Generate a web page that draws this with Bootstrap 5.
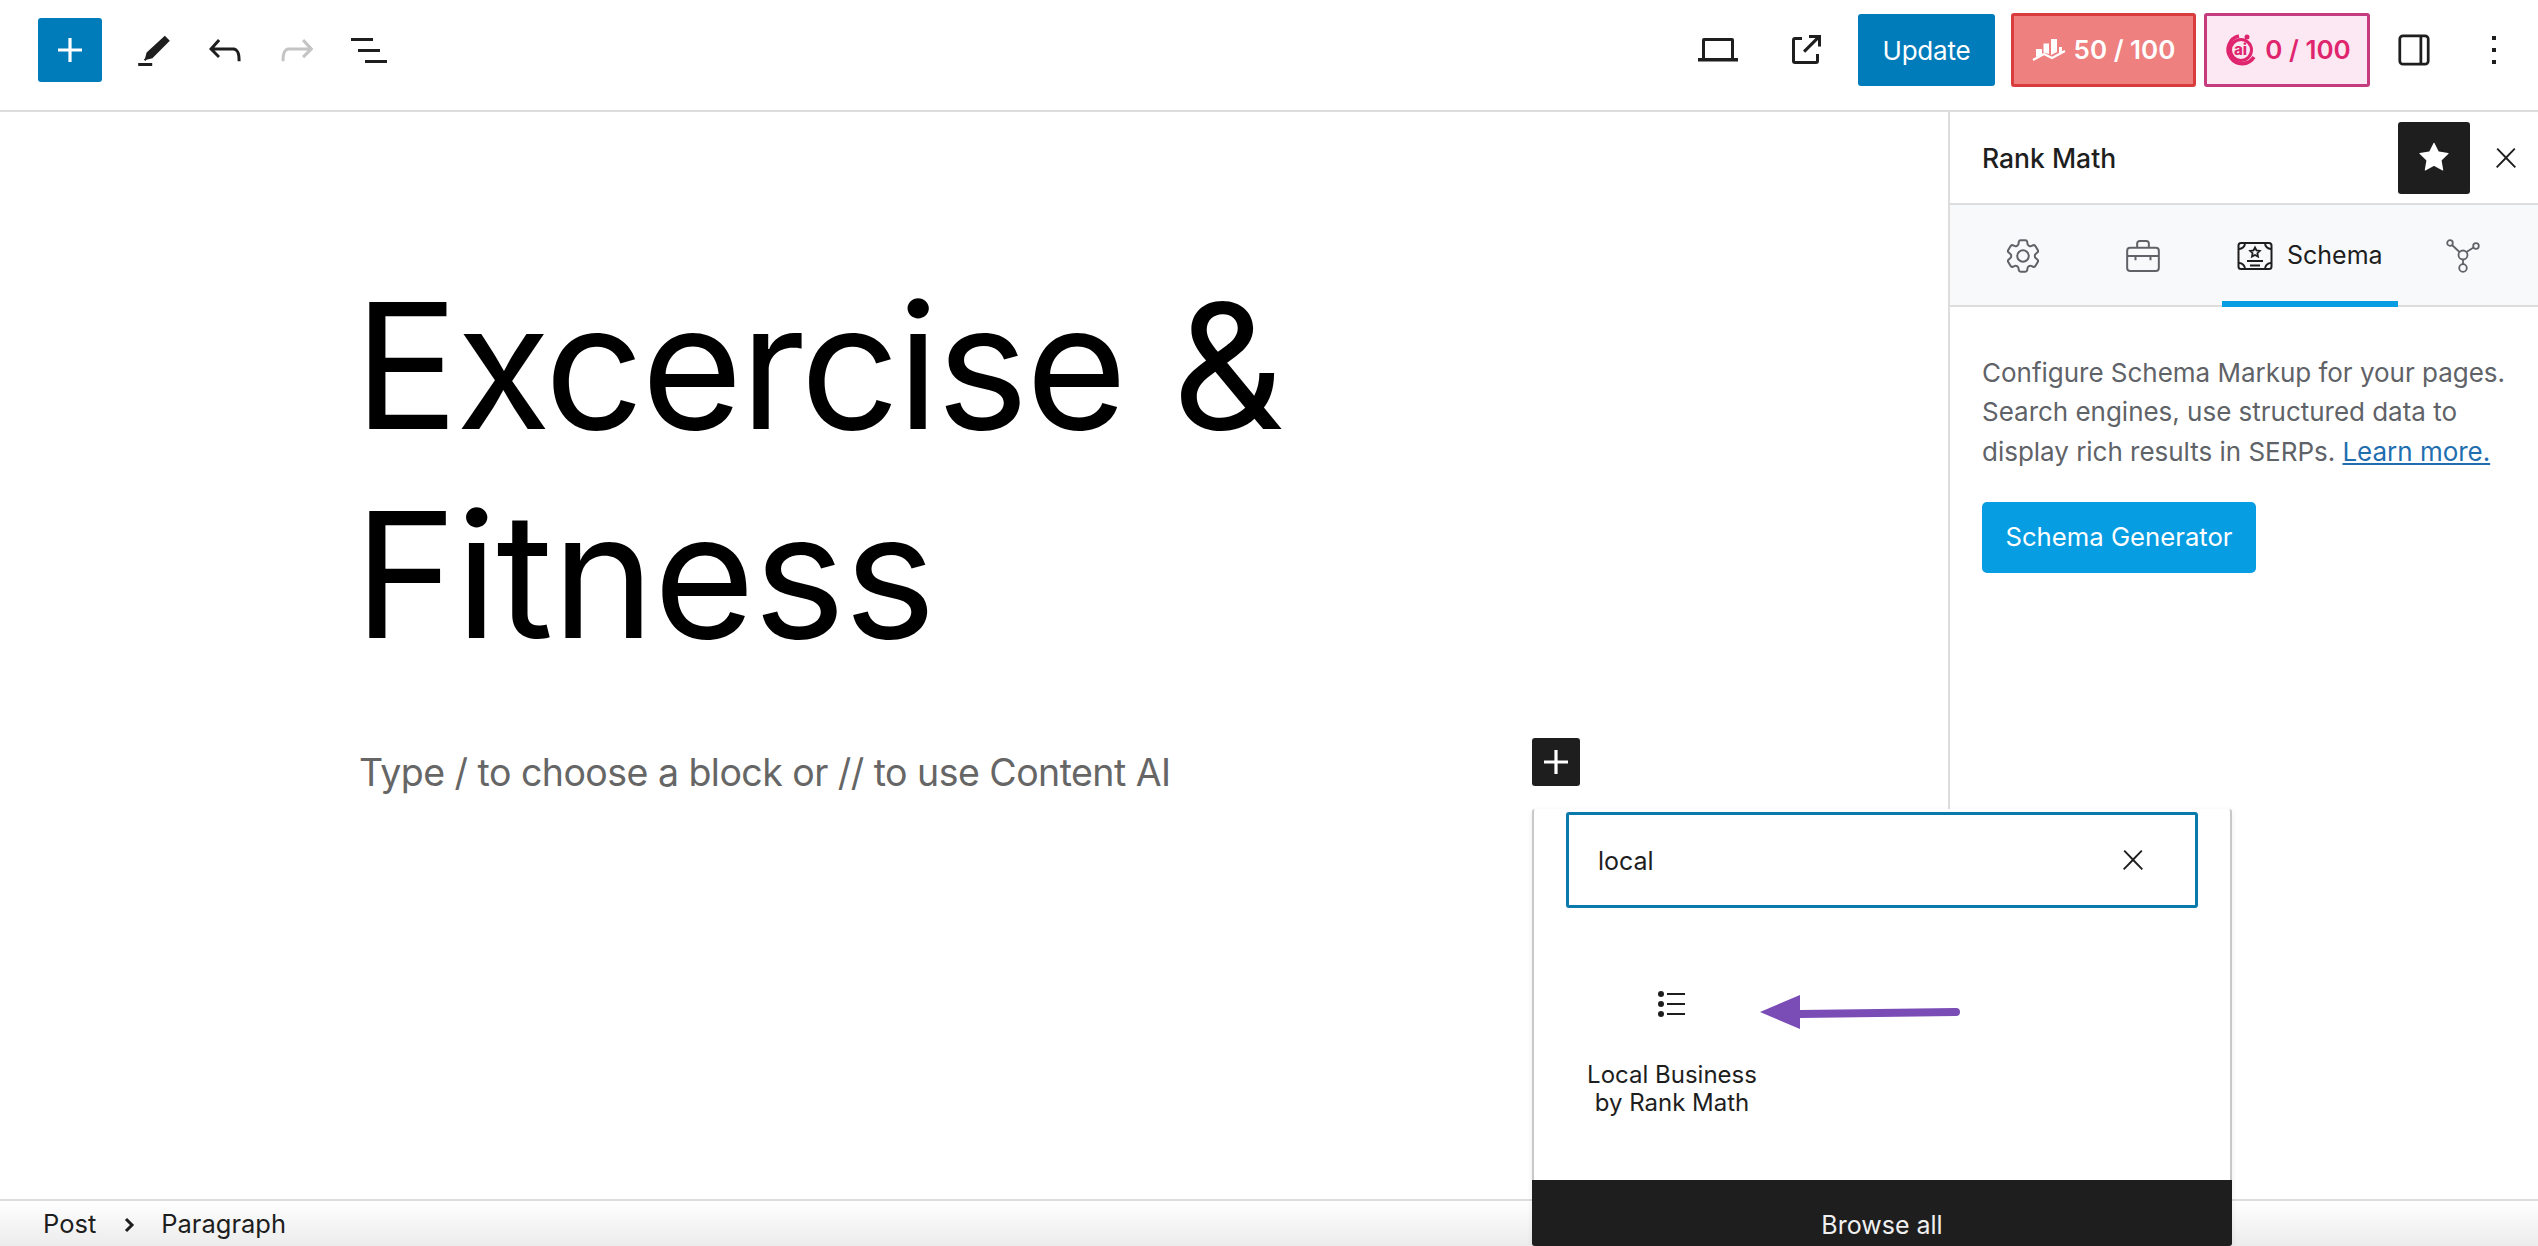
<!DOCTYPE html>
<html lang="en"><head><meta charset="utf-8"><title>Excercise &amp; Fitness</title>
<link href="https://cdn.jsdelivr.net/npm/bootstrap@5.3.0/dist/css/bootstrap.min.css" rel="stylesheet">
<style>
html,body{height:100%}
body{font-family:Inter,"Liberation Sans",sans-serif;color:#1e1e1e;background:#fff;overflow:hidden}
svg{display:block;fill:currentColor}
.tb{height:112px;border-bottom:2px solid #ddd;padding:0 8px 10px 38px;flex:none}
.ic{width:72px;height:64px;background:none;border:0;padding:0;color:#1e1e1e;flex:none}
.ic.off{color:#c4c4c4}
.addb{width:64px;height:64px;background:#007cba;color:#fff;border-radius:3px;border:0;padding:0;margin-right:15px;flex:none}
.upd{width:137px;height:72px;background:#007cba;color:#fff;border:0;border-radius:3px;font-size:26px;letter-spacing:-.2px;padding:0;margin-right:8px}
.upd:hover{background:#007cba;color:#fff}
.ext{width:88px}
.rm{height:74px;border-radius:3px;font-size:26px;font-weight:600;line-height:1;border:3px solid}
.rm1{width:185px;background:#ee8080;border-color:#d93c3c;color:#fff}
.rm2{width:166px;background:#fce8f2;border-color:#c43b7e;color:#e0256f}
.ai{font-family:Inter,sans-serif;font-size:15px;font-weight:800;fill:currentColor}
.wrap{flex:1 1 0;min-height:0}
.ed{flex:1 1 0;min-width:0;padding:149px 0 0 359px}
.ttl{font-size:174px;line-height:209px;font-weight:400;color:#000;margin:0 0 0 -5px;letter-spacing:-1.3px}
.tight{letter-spacing:-2.600px}
.ph{font-size:37.5px;line-height:60px;letter-spacing:-.54px;color:#666;margin:64px 0 0}
.sb{width:590px;flex:none;border-left:2px solid #ddd}
.sh{height:93px;border-bottom:2px solid #ddd;padding-left:32px}
.sh h2{font-size:26.5px;font-weight:500;margin:0;padding-top:2px;color:#1e1e1e}
.star{width:72px;height:72px;background:#1e1e1e;color:#fff;border:0;border-radius:3px;padding:0;margin-left:auto}
.xb{width:64px;height:64px;background:none;border:0;padding:0;color:#1e1e1e;flex:none}
.st{height:102px;background:#f8f9fa;border-bottom:2px solid #ddd;padding-left:13px}
.tabi{width:120px;height:100px;color:#5f6368;padding-top:2px}
.taba{width:176px;height:102px;margin-left:19px;box-shadow:inset 0 -6px 0 #069de3;color:#1e1e1e;padding:2px 0 2px 15px;font-size:25px;gap:14px}
.tabl{width:130px;height:100px;color:#5f6368;padding-top:2px}
.sp{padding:46px 20px 0 32px;font-size:26px;line-height:39.4px;letter-spacing:-.02px;color:#5f6368}
.sp a{color:#1f6fb0}
.gen{background:#069de3;color:#fff;border:0;border-radius:5px;width:274px;height:71px;font-size:25.700px;padding:0;margin-top:31px}
.gen:hover{background:#069de3;color:#fff}
.stat{height:47px;flex:none;border-top:2px solid #ddd;background:linear-gradient(#fff,#ececec);padding:2px 0 0 43px;font-size:25.500px}
.stat svg{margin:0 24px 0 25px}
.plusb{left:1532px;top:738px;width:48px;height:48px;background:#1e1e1e;color:#fff;border:0;border-radius:3px;padding:0}
.pop{left:1532px;top:809px;width:700px;bottom:0;background:#fff;border-left:2px solid #c8c8c8;border-right:2px solid #c8c8c8;border-radius:3px;box-shadow:0 2px 6px rgba(0,0,0,.08)}
.srch{margin:3px 32px 0;height:96px;border:3px solid #0a7aad;border-radius:3px;flex:none}
.srch .form-control{border:0;background:none;box-shadow:none;font-size:25px;padding:2px 0 0 29px;height:100%;color:#1e1e1e;font-family:inherit}
.srch .xb{margin-right:30px}
.itm{width:220px;margin:83px 0 0 28px;text-align:center;font-size:24px;line-height:28px;color:#1e1e1e}
.itm svg{margin:0 auto 44px}
.arr{left:226px;top:185px}
.brw{margin:auto -2px 0;height:66px;background:#1e1e1e;color:#f0f0f0;border:0;border-radius:0 0 3px 3px;font-size:25px;padding:20px 0 0;flex:none;line-height:50px}
</style></head>
<body class="d-flex flex-column position-relative">
<header class="tb d-flex align-items-center">
 <button class="addb d-flex align-items-center justify-content-center" aria-label="Add block"><svg width="48" height="48" viewBox="0 0 24 24"><path d="M18 11.200h-5.200V6h-1.600v5.200H6v1.600h5.200V18h1.600v-5.200H18z"/></svg></button>
 <button class="ic d-flex align-items-center justify-content-center" aria-label="Tools"><svg width="48" height="48" viewBox="0 0 24 24"><path d="M18.300 4.900l2.500 2.500-8.700 8.700-3 .8-.6.600-.7-.7.600-.6.800-3zM5 18.500h7V20H5z" transform="translate(-.4 0)"/></svg></button>
 <button class="ic d-flex align-items-center justify-content-center" aria-label="Undo"><svg width="48" height="48" viewBox="0 0 24 24"><path d="M18.300 11.700c-.6-.6-1.400-.9-2.300-.9H6.700l2.900-3.300-1.100-1-4.500 5L8.500 16l1-1-2.700-2.700H16c.5 0 .9.200 1.300.5 1 1 1 3.400 1 4.500v.3h1.500v-.2c0-1.500 0-4.300-1.500-5.700z"/></svg></button>
 <button class="ic off d-flex align-items-center justify-content-center" aria-label="Redo"><svg width="48" height="48" viewBox="0 0 24 24"><path d="M15.600 6.500l-1.100 1 2.900 3.300H8c-.9 0-1.700.3-2.300.9-1.400 1.500-1.400 4.200-1.400 5.700v.2h1.500v-.3c0-1.100 0-3.500 1-4.500.3-.3.7-.5 1.300-.5h9.200L14.500 15l1.100 1.100 4.600-4.600-4.600-5z"/></svg></button>
 <button class="ic d-flex align-items-center justify-content-center" aria-label="List view"><svg width="48" height="48" viewBox="0 0 24 24"><path d="M3 6h11v1.500H3V6zm3.500 5.500h11V13h-11v-1.500zM21 17H10v1.500h11V17z"/></svg></button>
 <div class="ms-auto d-flex align-items-center gap-2">
  <button class="ic d-flex align-items-center justify-content-center" aria-label="View"><svg width="40" height="24" viewBox="0 0 40 24"><path fill-rule="evenodd" d="M6 0h28a2 2 0 0 1 2 2v18h4v3.500H0V20h4V2a2 2 0 0 1 2-2zm1 3v17h26V3z"/></svg></button>
  <button class="ic ext d-flex align-items-center justify-content-center" aria-label="Preview"><svg width="32" height="32" viewBox="0 0 32 32"><path d="M12 3H5a3 3 0 0 0-3 3v21a3 3 0 0 0 3 3h21a3 3 0 0 0 3-3v-7h-3v7H5V6h7zM19 1v3h6.500L13 16.500l2.200 2.200L28 6v6.500h3V1z"/></svg></button>
  <button class="btn upd">Update</button>
  <div class="rm rm1 d-flex align-items-center justify-content-center gap-2"><svg width="34" height="22" viewBox="0 0 34 22"><path d="M4 10h6v5.500L4 18zM11.500 4.500H17V15l-5.500-1.500zM19 0h6v13l-6 3zM27 8h3v4l3 .5-6 2.500z"/><path d="M1 21l11-6 8 4 13-7" fill="none" stroke="currentColor" stroke-width="2"/></svg><span>50 / 100</span></div>
  <div class="rm rm2 d-flex align-items-center justify-content-center gap-2"><svg width="34" height="34" viewBox="0 0 34 34"><path d="M15 3A14 14 0 1 0 30 24" fill="none" stroke="currentColor" stroke-width="3.500" transform="translate(1 0)"/><circle cx="18" cy="17" r="10.500" fill="none" stroke="currentColor" stroke-width="3"/><circle cx="24" cy="4" r="2.500"/><text class="ai" x="11" y="22">ai</text></svg><span>0 / 100</span></div>
  <button class="ic d-flex align-items-center justify-content-center" aria-label="Settings"><svg width="44" height="44" viewBox="0 0 24 24"><path fill-rule="evenodd" d="M6 3.500h12A2.500 2.500 0 0 1 20.500 6v12a2.500 2.500 0 0 1-2.500 2.500H6A2.500 2.500 0 0 1 3.500 18V6A2.500 2.500 0 0 1 6 3.500zM5 6v12c0 .6.400 1 1 1h9V5H6c-.6 0-1 .4-1 1zm11.500 13H18c.6 0 1-.4 1-1V6c0-.6-.4-1-1-1h-1.500z"/></svg></button>
  <button class="ic d-flex align-items-center justify-content-center" aria-label="Options"><svg width="48" height="48" viewBox="0 0 24 24"><path d="M13 19h-2v-2h2v2zm0-6h-2v-2h2v2zm0-6h-2V5h2v2z"/></svg></button>
 </div>
</header>
<div class="wrap d-flex">
 <main class="ed">
  <h1 class="ttl"><span class="tight">Excercise</span> &amp;<br>Fitness</h1>
  <p class="ph">Type / to choose a block or // to use Content AI</p>
 </main>
 <aside class="sb d-flex flex-column">
  <div class="sh d-flex align-items-center"><h2>Rank Math</h2>
   <button class="star d-flex align-items-center justify-content-center" aria-label="Star"><svg width="48" height="48" viewBox="0 0 24 24"><path d="M11.776 4.454a.25.25 0 01.448 0l2.069 4.192a.25.25 0 00.188.137l4.626.672a.25.25 0 01.139.426l-3.348 3.263a.25.25 0 00-.072.222l.79 4.607a.25.25 0 01-.362.263l-4.138-2.175a.25.25 0 00-.232 0l-4.138 2.175a.25.25 0 01-.363-.263l.79-4.607a.25.25 0 00-.071-.222L4.754 9.881a.25.25 0 01.139-.426l4.626-.672a.25.25 0 00.188-.137l2.069-4.192z"/></svg></button>
   <button class="xb ms-1 d-flex align-items-center justify-content-center" aria-label="Close"><svg width="32" height="32" viewBox="0 0 24 24"><path d="M13 11.800l6.100-6.300-1-1-6.100 6.200-6.100-6.200-1 1 6.100 6.300-6.500 6.700 1 1 6.500-6.600 6.500 6.600 1-1z"/></svg></button>
  </div>
  <div class="st d-flex">
   <div class="tabi d-flex align-items-center justify-content-center"><svg width="42" height="42" viewBox="0 0 24 24" style="fill:none" stroke="currentColor" stroke-width="1.150"><path d="M9.594 3.940c.09-.542.56-.94 1.110-.94h2.593c.55 0 1.020.398 1.110.94l.213 1.281c.063.374.313.686.645.870.074.040.147.083.220.127.324.196.720.257 1.075.124l1.217-.456a1.125 1.125 0 011.370.490l1.296 2.247a1.125 1.125 0 01-.260 1.431l-1.003.827c-.293.240-.438.613-.431.992a6.759 6.759 0 010 .255c-.007.378.138.750.430.990l1.005.828c.424.350.534.954.260 1.430l-1.298 2.247a1.125 1.125 0 01-1.369.491l-1.217-.456c-.355-.133-.750-.072-1.076.124a6.570 6.570 0 01-.220.128c-.331.183-.581.495-.644.869l-.213 1.280c-.09.543-.56.941-1.110.941h-2.594c-.55 0-1.020-.398-1.110-.940l-.213-1.281c-.062-.374-.312-.686-.644-.870a6.520 6.520 0 01-.220-.127c-.325-.196-.720-.257-1.076-.124l-1.217.456a1.125 1.125 0 01-1.369-.490l-1.297-2.247a1.125 1.125 0 01.260-1.431l1.004-.827c.292-.240.437-.613.430-.992a6.932 6.932 0 010-.255c.007-.378-.138-.750-.430-.990l-1.004-.828a1.125 1.125 0 01-.260-1.430l1.297-2.247a1.125 1.125 0 011.370-.491l1.216.456c.356.133.751.072 1.076-.124.072-.044.146-.087.220-.128.332-.183.582-.495.644-.869l.214-1.281z"/><circle cx="12" cy="12" r="3.300"/></svg></div>
   <div class="tabi d-flex align-items-center justify-content-center"><svg width="40" height="40" viewBox="0 0 24 24" style="fill:none" stroke="currentColor" stroke-width="1.200"><rect x="2.500" y="7" width="19" height="14" rx="1.800"/><path d="M8.500 7V4.500c0-.8.600-1.500 1.500-1.500h4c.9 0 1.500.7 1.500 1.500V7M2.500 12h19M7.500 12v2.500M16.500 12v2.500"/></svg></div>
   <div class="taba d-flex align-items-center"><svg width="36" height="30" viewBox="0 0 36 30" style="fill:none" stroke="currentColor" stroke-width="2"><rect x="1.500" y="2" width="33" height="26" rx="2.500"/><path d="M2 8a6 6 0 0 0 6-6M28 2a6 6 0 0 0 6 6M34 22a6 6 0 0 0-6 6M8 28a6 6 0 0 0-6-6M10 20h16M13 24.500h10"/><path d="M18 6.500l1.500 3 3.300.4-2.400 2.300.6 3.300-3-1.600-3 1.600.6-3.300-2.400-2.300 3.300-.4z" stroke-width="1.800"/></svg><span>Schema</span></div>
   <div class="tabl d-flex align-items-center justify-content-center"><svg width="34" height="34" viewBox="0 0 34 34" style="fill:none" stroke="currentColor" stroke-width="1.800"><circle cx="4" cy="4" r="2.800"/><circle cx="30" cy="7" r="2.800"/><circle cx="17" cy="29" r="3.800"/><circle cx="17" cy="16" r="4.500"/><path d="M6 6l7.500 7M27.500 8.500l-7 4.500M17 20.500V25"/></svg></div>
  </div>
  <div class="sp">
   <div>Configure Schema Markup for your pages. Search engines, use structured data to display rich results in SERPs. <a href="#">Learn more.</a></div>
   <button class="btn gen">Schema Generator</button>
  </div>
 </aside>
</div>
<footer class="stat d-flex align-items-center">
 <span>Post</span><svg width="16" height="20" viewBox="0 0 16 20" style="fill:none" stroke="currentColor" stroke-width="3"><path d="M5 4l6 6-6 6"/></svg><span>Paragraph</span>
</footer>
<button class="plusb position-absolute d-flex align-items-center justify-content-center" aria-label="Add block"><svg width="48" height="48" viewBox="0 0 24 24"><path d="M18 11.200h-5.200V6h-1.600v5.200H6v1.600h5.200V18h1.600v-5.200H18z"/></svg></button>
<section class="pop position-absolute d-flex flex-column">
 <div class="srch d-flex align-items-center">
  <input class="form-control" type="text" value="local" aria-label="Search">
  <button class="xb d-flex align-items-center justify-content-center" aria-label="Clear"><svg width="32" height="32" viewBox="0 0 24 24"><path d="M13 11.800l6.100-6.300-1-1-6.100 6.200-6.100-6.200-1 1 6.100 6.300-6.500 6.700 1 1 6.500-6.600 6.500 6.600 1-1z"/></svg></button>
 </div>
 <div class="itm">
  <svg width="28" height="26" viewBox="0 0 28 26"><circle cx="3" cy="3" r="3"/><circle cx="3" cy="13" r="3"/><circle cx="3" cy="23" r="3"/><path d="M9 2h18v2H9zM9 12h18v2H9zM9 22h18v2H9z"/></svg>
  Local Business<br>by Rank Math
 </div>
 <svg class="arr position-absolute" width="200" height="36" viewBox="0 0 200 36" style="color:#7a4cb5"><path d="M0 18L40 1v34z"/><path d="M40 16l156-2a4 4 0 0 1 0 8l-156 2z"/></svg>
 <button class="brw">Browse all</button>
</section>
<script src="https://cdn.jsdelivr.net/npm/bootstrap@5.3.0/dist/js/bootstrap.bundle.min.js"></script>
</body></html>
